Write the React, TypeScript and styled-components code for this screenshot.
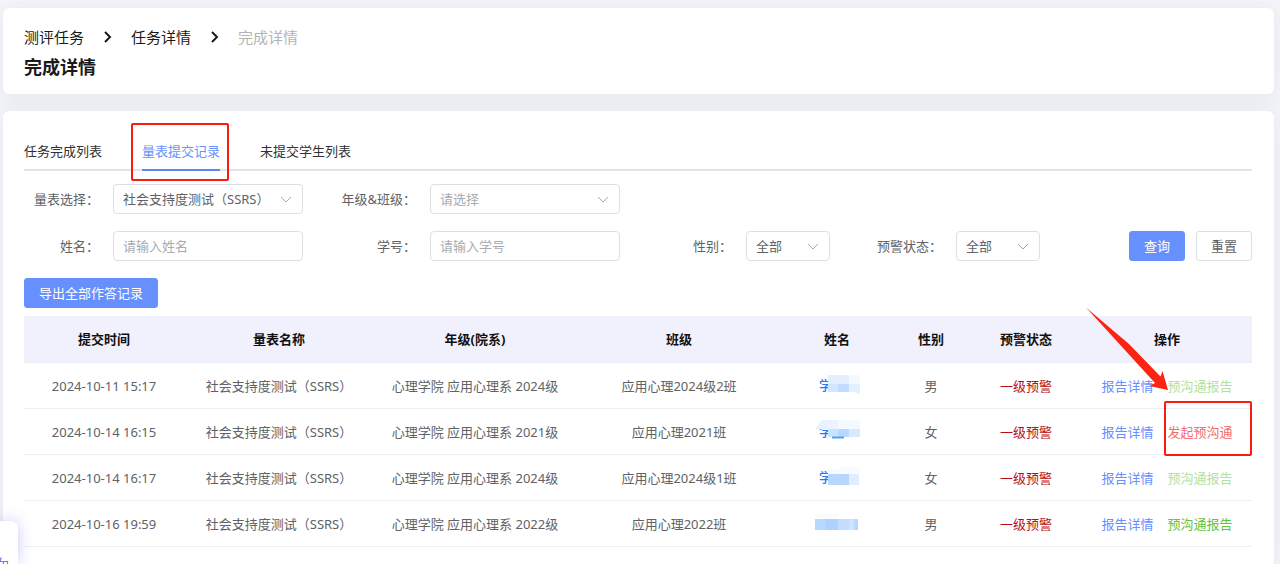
import React from "react";
import styled, { createGlobalStyle } from "styled-components";

const Global = createGlobalStyle`
  * { box-sizing: border-box; }
  body {
    margin: 0;
    background: #f4f5fa;
    color: #606266;
    font: 13px/20px "Noto Sans", "Noto Sans CJK SC", sans-serif;
  }
  button, input, select { font: inherit; color: inherit; }
`;

const Page = styled.div`
  display: flex;
  flex-direction: column;
  gap: 15px;
  min-height: 100vh;
  padding: 7px 5px 0 2px;
`;

const Card = styled.section`
  background: #fff;
  border: 1px solid #eceef3;
  border-radius: 7px;
  box-shadow: 0 5px 24px rgba(40, 60, 90, 0.07);
`;

const HeaderCard = styled(Card)`
  padding: 19px 22px 14px 21px;
`;

const MainCard = styled(Card)`
  flex: 1;
  padding: 30px 22px 0 21px;
  border-bottom: 0;
  border-radius: 7px 7px 0 0;
`;

const Breadcrumb = styled.nav`
  display: flex;
  align-items: center;
  gap: 18px;
  font-size: 15px;
  line-height: 20px;
`;

const Crumb = styled.a`
  color: #1a1a1a;
  text-decoration: none;
`;

const CurrentCrumb = styled.span`
  color: #b4b4b4;
`;

const Title = styled.h1`
  margin: 7px 0 0;
  color: #1a1a1a;
  font-size: 18px;
  line-height: 26px;
  font-weight: 700;
`;

const Tabs = styled.div`
  display: flex;
  gap: 40px;
  border-bottom: 2px solid #e0e4eb;
`;

const Tab = styled.button<{ $active?: boolean }>`
  position: relative;
  margin-bottom: -2px;
  padding: 0 0 8px;
  border: 0;
  border-bottom: 2px solid ${(p) => (p.$active ? "#5a85f7" : "transparent")};
  background: none;
  color: ${(p) => (p.$active ? "#6690fb" : "#303133")};
`;

const Marker = styled.span<{ $inset: string }>`
  position: absolute;
  inset: ${(p) => p.$inset};
  border: 2px solid #fb1a10;
  border-radius: 2px;
  pointer-events: none;
`;

const Filters = styled.form`
  display: flex;
  flex-direction: column;
  gap: 17px;
  margin: 13px 0 17px;
`;

const FilterRow = styled.div`
  display: flex;
  align-items: center;
`;

const Label = styled.label<{ $width: number }>`
  width: ${(p) => p.$width}px;
  padding-right: 14px;
  text-align: right;
`;

const Input = styled.input`
  width: 190px;
  height: 30px;
  padding: 0 9px;
  border: 1px solid #dcdfe6;
  border-radius: 4px;
  background: #fff;
  outline: none;
  &::placeholder { color: #a8abb2; }
`;

const SelectBox = styled.div<{ $small?: boolean }>`
  position: relative;
  width: ${(p) => (p.$small ? 84 : 190)}px;
`;

const NativeSelect = styled.select<{ $empty?: boolean }>`
  display: block;
  width: 100%;
  height: 30px;
  padding: 0 24px 0 9px;
  border: 1px solid #dcdfe6;
  border-radius: 4px;
  background: #fff;
  color: ${(p) => (p.$empty ? "#a8abb2" : "#606266")};
  appearance: none;
`;

const SelectIcon = styled.svg`
  position: absolute;
  top: 12px;
  right: 11px;
  pointer-events: none;
`;

const Actions = styled.div`
  display: flex;
  gap: 11px;
  margin-left: auto;
`;

const Button = styled.button<{ $primary?: boolean }>`
  height: 30px;
  padding: 0 14px;
  border: 1px solid ${(p) => (p.$primary ? "#6690fe" : "#dcdfe6")};
  border-radius: 3px;
  background: ${(p) => (p.$primary ? "#6690fe" : "#fff")};
  color: ${(p) => (p.$primary ? "#fff" : "#606266")};
`;

const Table = styled.table`
  width: 100%;
  margin-top: 8px;
  table-layout: fixed;
  border-collapse: separate;
  border-spacing: 0;
  text-align: center;
`;

const HeadCell = styled.th`
  height: 47px;
  padding: 0;
  border-bottom: 1px solid #ebeef5;
  background: #f1f1fe;
  color: #111;
  font-weight: 700;
`;

const Cell = styled.td`
  position: relative;
  height: 46px;
  padding: 1px 0 0;
  border-bottom: 1px solid #ebeef5;
  white-space: nowrap;
`;

const Warning = styled.span`
  color: #b80d12;
`;

const ActionCell = styled(Cell)`
  padding: 0;
`;

const ActionLinks = styled.div`
  display: flex;
  justify-content: center;
  gap: 14px;
`;

const ActionLink = styled.a<{ $color: string }>`
  color: ${(p) => p.$color};
  text-decoration: none;
`;

const NameLink = styled.a`
  display: block;
  height: 24px;
  color: #1f7cf0;
  text-decoration: none;
`;

const Arrow = styled.svg`
  position: absolute;
  top: -57px;
  left: 2px;
  z-index: 2;
  pointer-events: none;
`;

const FloatingPanel = styled.aside`
  position: fixed;
  left: 0;
  bottom: 0;
  width: 18px;
  height: 43px;
  border-radius: 0 7px 0 0;
  background: #fff;
  box-shadow: 0 0 14px rgba(100, 100, 245, 0.35);
`;

const FloatingText = styled.div`
  display: flex;
  justify-content: flex-end;
  width: 9px;
  height: 43px;
  padding-top: 34px;
  overflow: hidden;
  color: #7878f5;
  font-size: 16px;
  line-height: 20px;
`;

const CrumbArrow = () => (
  <svg width="11" height="12" viewBox="0 0 11 12" fill="none" stroke="#1a1a1a" strokeWidth="2" aria-hidden="true">
    <path d="M3 1 8 6 3 11" />
  </svg>
);

type SelectProps = { id: string; options: string[]; small?: boolean; empty?: boolean };

const Select = ({ id, options, small, empty }: SelectProps) => (
  <SelectBox $small={small}>
    <NativeSelect id={id} $empty={empty}>
      {options.map((o) => (
        <option key={o}>{o}</option>
      ))}
    </NativeSelect>
    <SelectIcon width="12" height="8" viewBox="0 0 12 8" fill="none" stroke="#a8abb2" aria-hidden="true">
      <path d="M1 1 6 6 11 1" />
    </SelectIcon>
  </SelectBox>
);

// Each mosaic block: x, y, width, height, colour
type Block = [number, number, number, number, string];

const mosaics: { text: boolean; blocks: Block[]; extra?: React.ReactNode }[] = [
  {
    text: true,
    blocks: [
      [13, 1, 21, 9, "#e3efff"], [34, 1, 11, 9, "#f5f9ff"],
      [13, 10, 10, 8, "#d2e6ff"], [23, 10, 11, 8, "#c2dcff"], [34, 10, 11, 8, "#e3f0ff"],
    ],
    extra: <path d="M38 18h7v2z" fill="#e3f0ff" />,
  },
  {
    text: true,
    blocks: [
      [12, 0, 11, 9, "#eaf3ff"], [23, 0, 22, 9, "#f4f8ff"],
      [13, 9, 10, 8, "#cce3ff"], [23, 9, 11, 8, "#b7d9ff"], [34, 9, 11, 8, "#d8eaff"],
    ],
    extra: (
      <>
        <path d="M0 9 7 0h5v9z" fill="#e7f1ff" />
        <path d="M17 17.5h12" stroke="#4fa2f7" strokeWidth="2" />
      </>
    ),
  },
  {
    text: true,
    blocks: [
      [13, 3, 11, 5, "#f6faff"], [24, 1, 21, 7, "#f8fbff"],
      [13, 8, 21, 11, "#b7d7ff"], [34, 8, 10, 11, "#e0efff"],
    ],
  },
  {
    text: false,
    blocks: [
      [0, 2, 23, 4, "#f8fbff"], [0, 7, 11, 11, "#b7d7ff"], [11, 7, 12, 11, "#add2ff"],
      [23, 7, 11, 11, "#c2ddff"], [34, 7, 5, 11, "#cde3ff"], [39, 7, 4, 11, "#b7d9ff"],
    ],
  },
];

const MaskedName = ({ index }: { index: number }) => {
  const m = mosaics[index];
  return (
    <NameLink href="#" aria-label="姓名">
      <svg width="45" height="24" viewBox="0 0 45 24">
        {m.text && (
          <text x="4" y="16" fontSize="13" fontWeight="500" fill="currentColor">
            学
          </text>
        )}
        {m.blocks.map(([x, y, w, h, fill]) => (
          <rect key={`${x}-${y}`} x={x} y={y} width={w} height={h} fill={fill} shapeRendering="crispEdges" />
        ))}
        {m.extra}
      </svg>
    </NameLink>
  );
};

const columns: [string, number][] = [
  ["提交时间", 160],
  ["量表名称", 190],
  ["年级(院系)", 202],
  ["班级", 206],
  ["姓名", 110],
  ["性别", 78],
  ["预警状态", 112],
  ["操作", 170],
];

const rows = [
  { time: "2024-10-11 15:17", grade: "2024级", group: "应用心理2024级2班", sex: "男", action: "预沟通报告", color: "#b3e19d" },
  { time: "2024-10-14 16:15", grade: "2021级", group: "应用心理2021班", sex: "女", action: "发起预沟通", color: "#f56c6c" },
  { time: "2024-10-14 16:17", grade: "2024级", group: "应用心理2024级1班", sex: "女", action: "预沟通报告", color: "#b3e19d" },
  { time: "2024-10-16 19:59", grade: "2022级", group: "应用心理2022班", sex: "男", action: "预沟通报告", color: "#67c23a" },
];

export default function App() {
  return (
    <>
      <Global />
      <Page lang="zh-CN">
        <HeaderCard>
          <Breadcrumb>
            <Crumb href="#">测评任务</Crumb>
            <CrumbArrow />
            <Crumb href="#">任务详情</Crumb>
            <CrumbArrow />
            <CurrentCrumb>完成详情</CurrentCrumb>
          </Breadcrumb>
          <Title>完成详情</Title>
        </HeaderCard>

        <MainCard>
          <Tabs role="tablist">
            <Tab role="tab">任务完成列表</Tab>
            <Tab role="tab" aria-selected $active>
              量表提交记录
              <Marker $inset="-18px -9px -12px -11px" />
            </Tab>
            <Tab role="tab">未提交学生列表</Tab>
          </Tabs>

          <Filters onSubmit={(e) => e.preventDefault()}>
            <FilterRow>
              <Label $width={89} htmlFor="scale">量表选择：</Label>
              <Select id="scale" options={["社会支持度测试（SSRS）"]} />
              <Label $width={127} htmlFor="grade">年级&班级：</Label>
              <Select id="grade" options={["请选择"]} empty />
            </FilterRow>
            <FilterRow>
              <Label $width={89} htmlFor="name">姓名：</Label>
              <Input id="name" placeholder="请输入姓名" />
              <Label $width={127} htmlFor="number">学号：</Label>
              <Input id="number" placeholder="请输入学号" />
              <Label $width={126} htmlFor="sex">性别：</Label>
              <Select id="sex" options={["全部", "男", "女"]} small />
              <Label $width={126} htmlFor="status">预警状态：</Label>
              <Select id="status" options={["全部", "一级预警"]} small />
              <Actions>
                <Button type="submit" $primary>查询</Button>
                <Button type="reset">重置</Button>
              </Actions>
            </FilterRow>
          </Filters>

          <Button type="button" $primary>导出全部作答记录</Button>

          <Table>
            <colgroup>
              {columns.map(([name, width]) => (
                <col key={name} width={width} />
              ))}
            </colgroup>
            <thead>
              <tr>
                {columns.map(([name]) => (
                  <HeadCell key={name} scope="col">{name}</HeadCell>
                ))}
              </tr>
            </thead>
            <tbody>
              {rows.map((r, i) => (
                <tr key={r.time}>
                  <Cell>{r.time}</Cell>
                  <Cell>社会支持度测试（SSRS）</Cell>
                  <Cell>心理学院 应用心理系 {r.grade}</Cell>
                  <Cell>{r.group}</Cell>
                  <Cell><MaskedName index={i} /></Cell>
                  <Cell>{r.sex}</Cell>
                  <Cell><Warning>一级预警</Warning></Cell>
                  <ActionCell>
                    <ActionLinks>
                      <ActionLink href="#" $color="#6690fe">报告详情</ActionLink>
                      <ActionLink href="#" $color={r.color}>{r.action}</ActionLink>
                    </ActionLinks>
                    {i === 0 && (
                      <Arrow width="90" height="90" viewBox="0 0 90 90" fill="#fb2413" aria-hidden="true">
                        <path d="M2 1.5 45 38 76.500 70.500 78.500 65 84 84 65.500 80 71 77 39 42Z" />
                      </Arrow>
                    )}
                    {i === 1 && <Marker $inset="-8px 0 -2px 82px" />}
                  </ActionCell>
                </tr>
              ))}
            </tbody>
          </Table>
        </MainCard>
      </Page>
      <FloatingPanel>
        <FloatingText>你</FloatingText>
      </FloatingPanel>
    </>
  );
}
